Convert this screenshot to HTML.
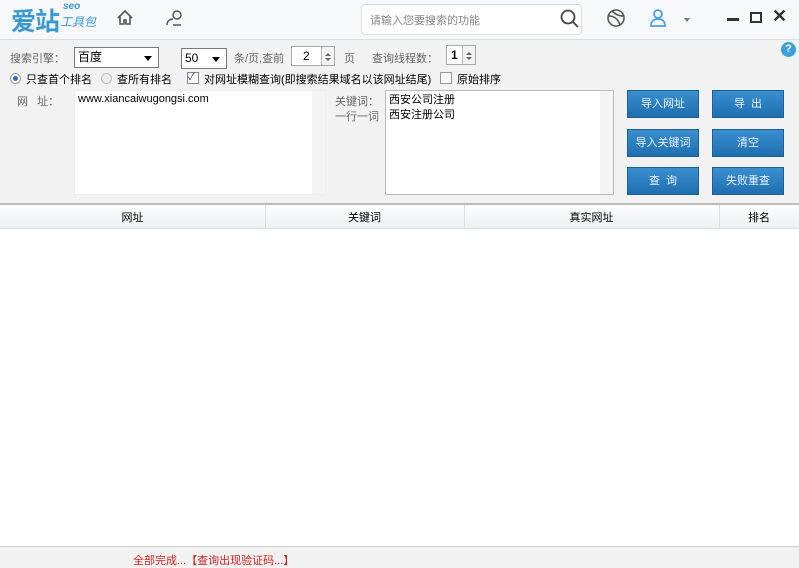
<!DOCTYPE html>
<html><head><meta charset="utf-8">
<style>
*{margin:0;padding:0;box-sizing:border-box}
body{width:799px;height:566px;overflow:hidden;background:#f2f2f2;font-family:"Liberation Sans","Noto Sans CJK SC",sans-serif;font-size:11px;color:#333;position:relative}
.a{position:absolute;white-space:nowrap}
.g{color:#666}
.btn{position:absolute;width:72px;height:28px;background:linear-gradient(#3a8fcf,#1f6fb0);border:1px solid #1a5f98;color:#e8f2fb;font-size:11px;text-align:center;line-height:26px}
.sel{position:absolute;background:#fff;border:1px solid #7a7a7a;height:21px;line-height:19px;padding-left:3px;font-size:12px;color:#000}
.sel:after{content:"";position:absolute;right:6px;top:8px;border:4px solid transparent;border-top:5px solid #000}
.spin{position:absolute;background:#fff;border:1px solid #aaa;height:20px;line-height:18px;font-size:12px;color:#000}
.spin i{position:absolute;right:0;top:0;width:13px;height:18px;border-left:1px solid #bbb;background:#f2f2f2}
.spin i:before{content:"";position:absolute;left:3px;top:3px;border:3px solid transparent;border-bottom:3px solid #666}
.spin i:after{content:"";position:absolute;left:3px;top:11px;border:3px solid transparent;border-top:3px solid #666}
.ta{position:absolute;background:#fff;border:1px solid #ccc}
</style></head><body>
<div class="a" style="left:0;top:0;width:799px;height:40px;background:#f7f8fa;border-bottom:1px solid #ddd"></div>
<div class="a" style="left:11px;top:2px;font-size:25px;color:#3a9ad0;font-weight:bold;letter-spacing:-1px">爱站</div>
<div class="a" style="left:63px;top:1px;font-size:10px;color:#3a9ad0;font-style:italic;font-weight:bold">seo</div>
<div class="a" style="left:60px;top:13px;font-size:12px;color:#3a9ad0;font-style:italic">工具包</div>
<svg class="a" style="left:116px;top:9px" width="18" height="18" viewBox="0 0 18 18" fill="none" stroke="#555" stroke-width="1.6"><path d="M2 9L9 2l7 7M4 7v8h4v-4h2v4h4V7"/></svg>
<svg class="a" style="left:165px;top:9px" width="20" height="18" viewBox="0 0 20 18" fill="none" stroke="#555" stroke-width="1.5"><circle cx="12" cy="6" r="4"/><path d="M2 16c0-4 3-6 6-6M8 16h8"/></svg>
<div class="a" style="left:361px;top:4px;width:221px;height:31px;background:#fff;border:1px solid #ddd;border-radius:4px"></div>
<div class="a" style="left:370px;top:12px;color:#888;font-size:11px">请输入您要搜索的功能</div>
<svg class="a" style="left:560px;top:9px" width="20" height="20" viewBox="0 0 20 20" fill="none" stroke="#444" stroke-width="1.8"><circle cx="8" cy="8" r="6.5"/><path d="M13 13l5 5"/></svg>
<svg class="a" style="left:606px;top:8px" width="20" height="20" viewBox="0 0 20 20" fill="none" stroke="#555" stroke-width="1.6"><circle cx="10" cy="10" r="8"/><path d="M3 8c5 0 9 3 11 9M6 3c3 3 6 5 12 5"/></svg>
<svg class="a" style="left:649px;top:8px" width="18" height="20" viewBox="0 0 18 20" fill="none" stroke="#4a9fe0" stroke-width="1.8"><circle cx="9" cy="6" r="4"/><path d="M2 18c0-5 3-7 7-7s7 2 7 7z"/></svg>
<div class="a" style="left:684px;top:18px;border:3px solid transparent;border-top:4px solid #777"></div>
<div class="a" style="left:727px;top:18px;width:12px;height:3px;background:#333"></div>
<div class="a" style="left:750px;top:12px;width:12px;height:11px;border:2px solid #333"></div>
<div class="a" style="left:772px;top:6px;font-size:18px;font-weight:bold;color:#333">✕</div>

<div class="a g" style="left:10px;top:50px">搜索引擎：</div>
<div class="sel" style="left:74px;top:47px;width:85px">百度</div>
<div class="sel" style="left:181px;top:48px;width:46px">50</div>
<div class="a g" style="left:234px;top:50px">条/页,查前</div>
<div class="spin" style="left:291px;top:46px;width:44px;padding-left:11px">2<i></i></div>
<div class="a g" style="left:344px;top:50px">页</div>
<div class="a g" style="left:372px;top:50px">查询线程数：</div>
<div class="spin" style="left:446px;top:45px;width:30px;padding-left:4px;font-weight:bold">1<i></i></div>
<div class="a" style="left:781px;top:42px;width:15px;height:15px;border-radius:50%;background:#3aa0e0;color:#fff;font-size:11px;font-weight:bold;text-align:center;line-height:15px">?</div>

<div class="a" style="left:10px;top:73px;width:11px;height:11px;border-radius:50%;border:1px solid #999;background:#fff"><div style="margin:2px;width:5px;height:5px;border-radius:50%;background:#2b6fb0"></div></div>
<div class="a" style="left:26px;top:71px;color:#000">只查首个排名</div>
<div class="a" style="left:101px;top:73px;width:11px;height:11px;border-radius:50%;border:1px solid #bbb;background:#eee"></div>
<div class="a" style="left:117px;top:71px;color:#000">查所有排名</div>
<div class="a" style="left:187px;top:72px;width:12px;height:12px;border:1px solid #888;background:#fff;font-size:10px;line-height:10px;color:#335">✓</div>
<div class="a" style="left:204px;top:71px;color:#000">对网址模糊查询(即搜索结果域名以该网址结尾)</div>
<div class="a" style="left:440px;top:72px;width:12px;height:12px;border:1px solid #999;background:#fafafa"></div>
<div class="a" style="left:457px;top:71px;color:#000">原始排序</div>

<div class="a g" style="left:17px;top:93px">网&nbsp;&nbsp;&nbsp;址：</div>
<div class="ta" style="left:74px;top:90px;width:252px;height:105px;border-color:#eee"></div>
<div class="a" style="left:312px;top:91px;width:13px;height:103px;background:#f4f4f4"></div>
<div class="a" style="left:78px;top:93px;color:#000">www.xiancaiwugongsi.com</div>
<div class="a g" style="left:335px;top:93px">关键词：</div>
<div class="a g" style="left:335px;top:108px">一行一词</div>
<div class="ta" style="left:385px;top:90px;width:229px;height:105px;border-color:#bbb"></div>
<div class="a" style="left:600px;top:91px;width:13px;height:103px;background:#f4f4f4"></div>
<div class="a" style="left:389px;top:93px;color:#000;line-height:15px">西安公司注册<br>西安注册公司</div>

<div class="btn" style="left:627px;top:90px">导入网址</div>
<div class="btn" style="left:712px;top:90px">导&nbsp;&nbsp;出</div>
<div class="btn" style="left:627px;top:129px">导入关键词</div>
<div class="btn" style="left:712px;top:129px">清空</div>
<div class="btn" style="left:627px;top:167px">查&nbsp;&nbsp;询</div>
<div class="btn" style="left:712px;top:167px">失败重查</div>

<div class="a" style="left:0;top:203px;width:799px;height:344px;background:#fff;border-top:2px solid #bbb;border-bottom:1px solid #ccc"></div>
<div class="a" style="left:0;top:205px;width:799px;height:24px;background:linear-gradient(#fdfdfd,#eef0f2);border-bottom:1px solid #ddd"></div>
<div class="a" style="left:265px;top:205px;width:1px;height:24px;background:#ddd"></div>
<div class="a" style="left:464px;top:205px;width:1px;height:24px;background:#ddd"></div>
<div class="a" style="left:719px;top:205px;width:1px;height:24px;background:#ddd"></div>
<div class="a" style="left:0;top:209px;width:265px;text-align:center;color:#000">网址</div>
<div class="a" style="left:265px;top:209px;width:199px;text-align:center;color:#000">关键词</div>
<div class="a" style="left:464px;top:209px;width:255px;text-align:center;color:#000">真实网址</div>
<div class="a" style="left:719px;top:209px;width:80px;text-align:center;color:#000">排名</div>

<div class="a" style="left:133px;top:552px;color:#d02020;font-size:11px">全部完成...【查询出现验证码...】</div>
</body></html>
